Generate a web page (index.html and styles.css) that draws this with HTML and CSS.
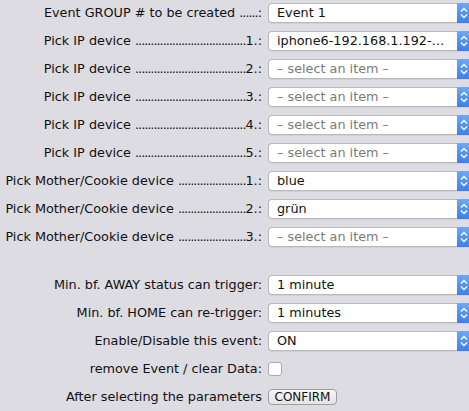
FILE: index.html
```html
<!DOCTYPE html>
<html>
<head>
<meta charset="utf-8">
<link rel="stylesheet" href="styles.css">
</head>
<body>
<div class="form">
  <label class="lbl">Event GROUP # to be created <span class="dots">......</span>:</label>
  <div class="sel"><span class="val">Event 1</span><span class="step"><svg viewBox="0 0 14 20" width="14" height="20"><path d="M4 8.5 L7 5.5 L10 8.5 M4 11.5 L7 14.5 L10 11.5" fill="none" stroke="#fff" stroke-width="1.4"/></svg></span></div>

  <label class="lbl">Pick IP device <span class="dots">....................................</span>1.:</label>
  <div class="sel"><span class="val">iphone6-192.168.1.192-…</span><span class="step"><svg viewBox="0 0 14 20" width="14" height="20"><path d="M4 8.5 L7 5.5 L10 8.5 M4 11.5 L7 14.5 L10 11.5" fill="none" stroke="#fff" stroke-width="1.4"/></svg></span></div>

  <label class="lbl">Pick IP device <span class="dots">....................................</span>2.:</label>
  <div class="sel"><span class="val ph">– select an item –</span><span class="step"><svg viewBox="0 0 14 20" width="14" height="20"><path d="M4 8.5 L7 5.5 L10 8.5 M4 11.5 L7 14.5 L10 11.5" fill="none" stroke="#fff" stroke-width="1.4"/></svg></span></div>

  <label class="lbl">Pick IP device <span class="dots">....................................</span>3.:</label>
  <div class="sel"><span class="val ph">– select an item –</span><span class="step"><svg viewBox="0 0 14 20" width="14" height="20"><path d="M4 8.5 L7 5.5 L10 8.5 M4 11.5 L7 14.5 L10 11.5" fill="none" stroke="#fff" stroke-width="1.4"/></svg></span></div>

  <label class="lbl">Pick IP device <span class="dots">....................................</span>4.:</label>
  <div class="sel"><span class="val ph">– select an item –</span><span class="step"><svg viewBox="0 0 14 20" width="14" height="20"><path d="M4 8.5 L7 5.5 L10 8.5 M4 11.5 L7 14.5 L10 11.5" fill="none" stroke="#fff" stroke-width="1.4"/></svg></span></div>

  <label class="lbl">Pick IP device <span class="dots">....................................</span>5.:</label>
  <div class="sel"><span class="val ph">– select an item –</span><span class="step"><svg viewBox="0 0 14 20" width="14" height="20"><path d="M4 8.5 L7 5.5 L10 8.5 M4 11.5 L7 14.5 L10 11.5" fill="none" stroke="#fff" stroke-width="1.4"/></svg></span></div>

  <label class="lbl">Pick Mother/Cookie device <span class="dots">......................</span>1.:</label>
  <div class="sel"><span class="val">blue</span><span class="step"><svg viewBox="0 0 14 20" width="14" height="20"><path d="M4 8.5 L7 5.5 L10 8.5 M4 11.5 L7 14.5 L10 11.5" fill="none" stroke="#fff" stroke-width="1.4"/></svg></span></div>

  <label class="lbl">Pick Mother/Cookie device <span class="dots">......................</span>2.:</label>
  <div class="sel"><span class="val">grün</span><span class="step"><svg viewBox="0 0 14 20" width="14" height="20"><path d="M4 8.5 L7 5.5 L10 8.5 M4 11.5 L7 14.5 L10 11.5" fill="none" stroke="#fff" stroke-width="1.4"/></svg></span></div>

  <label class="lbl">Pick Mother/Cookie device <span class="dots">......................</span>3.:</label>
  <div class="sel"><span class="val ph">– select an item –</span><span class="step"><svg viewBox="0 0 14 20" width="14" height="20"><path d="M4 8.5 L7 5.5 L10 8.5 M4 11.5 L7 14.5 L10 11.5" fill="none" stroke="#fff" stroke-width="1.4"/></svg></span></div>

  <div class="spacer"></div><div class="spacer"></div>

  <label class="lbl">Min. bf. AWAY status can trigger:</label>
  <div class="sel"><span class="val">1 minute</span><span class="step"><svg viewBox="0 0 14 20" width="14" height="20"><path d="M4 8.5 L7 5.5 L10 8.5 M4 11.5 L7 14.5 L10 11.5" fill="none" stroke="#fff" stroke-width="1.4"/></svg></span></div>

  <label class="lbl">Min. bf. HOME can re-trigger:</label>
  <div class="sel"><span class="val">1 minutes</span><span class="step"><svg viewBox="0 0 14 20" width="14" height="20"><path d="M4 8.5 L7 5.5 L10 8.5 M4 11.5 L7 14.5 L10 11.5" fill="none" stroke="#fff" stroke-width="1.4"/></svg></span></div>

  <label class="lbl">Enable/Disable this event:</label>
  <div class="sel"><span class="val">ON</span><span class="step"><svg viewBox="0 0 14 20" width="14" height="20"><path d="M4 8.5 L7 5.5 L10 8.5 M4 11.5 L7 14.5 L10 11.5" fill="none" stroke="#fff" stroke-width="1.4"/></svg></span></div>

  <label class="lbl">remove Event / clear Data:</label>
  <div class="cbwrap"><span class="cb"></span></div>

  <label class="lbl">After selecting the parameters</label>
  <div class="btnwrap"><button class="btn">CONFIRM</button></div>
</div>
</body>
</html>
```
FILE: styles.css
```css
html, body {
  margin: 0;
  padding: 0;
  background: #dddce2;
  overflow: hidden;
}
body {
  font-family: "DejaVu Sans", sans-serif;
  font-size: 12.8px;
  color: #111;
}
.form {
  display: grid;
  grid-template-columns: 262px 205px;
  column-gap: 6px;
  row-gap: 8px;
  padding-top: 3px;
  width: 480px;
}
.lbl {
  text-align: right;
  white-space: nowrap;
  align-self: center;
  line-height: 20px;
}
.dots {
  letter-spacing: -1px;
}
.sel {
  height: 20px;
  box-sizing: border-box;
  background: #fff;
  border: 1px solid #b9b8bd;
  border-right: none;
  border-radius: 4px 0 0 4px;
  display: flex;
  align-items: stretch;
  box-shadow: 0 1px 0 rgba(0,0,0,0.05);
}
.val {
  flex: 1;
  padding-left: 8px;
  line-height: 18px;
  white-space: nowrap;
  overflow: hidden;
  padding-right: 2px;
}
.ph { color: #7b7b7b; }
.step {
  width: 16px;
  margin: -1px 0;
  background: linear-gradient(#6fa8f8, #3a7ef2);
  border-radius: 0 4px 4px 0;
  display: flex;
  align-items: center;
  justify-content: flex-start;
}
.step svg { display: block; }
.spacer { height: 12px; }
.cbwrap {
  height: 20px;
  display: flex;
  align-items: center;
}
.cb {
  width: 14px;
  height: 14px;
  box-sizing: border-box;
  background: #fff;
  border: 1px solid #a9a9ae;
  border-radius: 3px;
}
.btnwrap {
  display: flex;
  align-items: center;
}
.btn {
  font-family: "DejaVu Sans", sans-serif;
  font-size: 12px;
  color: #111;
  height: 16px;
  width: 69px;
  padding: 0;
  background: linear-gradient(#f6f6f6, #e4e4e4);
  border: 1px solid #9e9ea2;
  border-radius: 4px;
  line-height: 14px;
}
```
